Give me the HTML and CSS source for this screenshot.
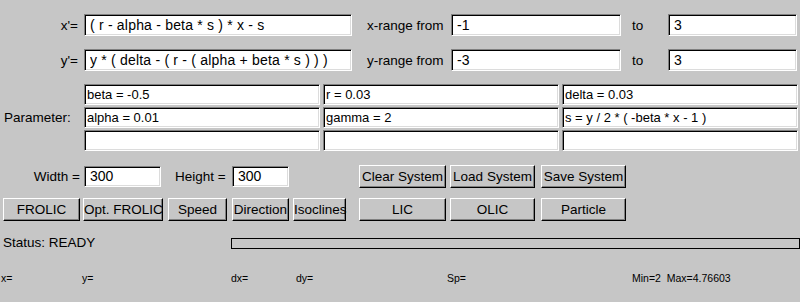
FILE: index.html
```html
<!DOCTYPE html>
<html>
<head>
<meta charset="utf-8">
<link rel="stylesheet" href="styles.css">
</head>
<body>
<div class="app">
  <div class="row eq-row">
    <label class="eq-label">x'=</label>
    <input class="field eq-field" value="( r - alpha - beta * s ) * x - s">
    <label class="range-label">x-range from</label>
    <input class="field from-field" value="-1">
    <label class="to-label">to</label>
    <input class="field to-field" value="3">
  </div>
  <div class="row eq-row second">
    <label class="eq-label">y'=</label>
    <input class="field eq-field" value="y * ( delta - ( r - ( alpha + beta * s ) ) )">
    <label class="range-label">y-range from</label>
    <input class="field from-field" value="-3">
    <label class="to-label">to</label>
    <input class="field to-field" value="3">
  </div>
  <div class="params">
    <div class="param-label">Parameter:</div>
    <div class="param-grid">
      <input class="field pfield" value="beta = -0.5">
      <input class="field pfield" value="r = 0.03">
      <input class="field pfield" value="delta = 0.03">
      <input class="field pfield" value="alpha = 0.01">
      <input class="field pfield" value="gamma = 2">
      <input class="field pfield" value="s = y / 2 * ( -beta * x - 1 )">
      <input class="field pfield" value="">
      <input class="field pfield" value="">
      <input class="field pfield" value="">
    </div>
  </div>
  <div class="row size-row">
    <label class="w-label">Width =</label>
    <input class="field w-field" value="300">
    <label class="h-label">Height =</label>
    <input class="field h-field" value="300">
    <button class="btn b-c1">Clear System</button>
    <button class="btn b-c2">Load System</button>
    <button class="btn b-c3">Save System</button>
  </div>
  <div class="row btn-row">
    <button class="btn b-frolic">FROLIC</button>
    <button class="btn b-opt">Opt. FROLIC</button>
    <button class="btn b-speed">Speed</button>
    <button class="btn b-dir">Direction</button>
    <button class="btn b-iso">Isoclines</button>
    <button class="btn b-c1">LIC</button>
    <button class="btn b-c2">OLIC</button>
    <button class="btn b-c3">Particle</button>
  </div>
  <div class="row status-row">
    <div class="status">Status: READY</div>
    <div class="progress"></div>
  </div>
  <div class="row info-row">
    <span class="info i-x">x=</span>
    <span class="info i-y">y=</span>
    <span class="info i-dx">dx=</span>
    <span class="info i-dy">dy=</span>
    <span class="info i-sp">Sp=</span>
    <span class="info i-mm">Min=2&nbsp; Max=4.76603</span>
  </div>
</div>
</body>
</html>
```
FILE: styles.css
```css
html { background: #ffffff; }
body {
  margin: 0;
  font-family: "Liberation Sans", Arial, sans-serif;
  font-size: 13.5px;
  color: #000;
}
.app {
  width: 800px;
  height: 302px;
  background: #c6c6c6;
  padding-top: 14px;
  box-sizing: border-box;
}
.row {
  display: flex;
  align-items: center;
}
.field {
  box-sizing: border-box;
  margin: 0;
  font-family: "Liberation Sans", Arial, sans-serif;
  font-size: 14px;
  color: #000;
  background: #fff;
  border: 1px solid;
  border-color: #808080 #ffffff #ffffff #808080;
  box-shadow: inset 1px 1px 0 #000, inset -1px -1px 0 #dcdcdc;
  padding: 0 0 0 5px;
  outline: none;
}
.eq-row { height: 22px; }
.eq-row.second { margin-top: 13px; }
.eq-label { width: 78px; text-align: right; margin-right: 6px; }
.eq-field { width: 268px; height: 22px; letter-spacing: 0.2px; }
.range-label { margin-left: 15px; width: 84px; }
.from-field { width: 170px; height: 22px; }
.to-label { width: 36px; padding-left: 11px; }
.to-field { width: 129px; height: 22px; }

.params {
  display: flex;
  align-items: center;
  margin-top: 13px;
}
.param-label { width: 84px; padding-left: 4px; box-sizing: border-box; }
.param-grid {
  display: grid;
  grid-template-columns: 236px 236px 236px;
  grid-auto-rows: 21px;
  column-gap: 3px;
  row-gap: 2px;
}
.pfield { height: 21px; padding-left: 2px; font-size: 13px; }

.size-row { margin-top: 14px; height: 22px; }
.w-label { width: 80px; text-align: right; margin-right: 4px; }
.w-field { width: 77px; height: 21px; }
.h-label { margin-left: 14px; width: 57px; }
.h-field { width: 57px; height: 21px; }

.btn {
  box-sizing: border-box;
  margin: 0;
  padding: 0;
  height: 23px;
  font-family: "Liberation Sans", Arial, sans-serif;
  font-size: 13.5px;
  color: #000;
  background: #c6c6c6;
  border: 1px solid;
  border-color: #ffffff #000000 #000000 #ffffff;
  box-shadow: inset -1px -1px 0 #808080;
  text-align: center;
  white-space: nowrap;
}
.size-row .b-c1 { margin-left: 70px; }
.b-c1 { width: 87px; }
.b-c2 { width: 85px; margin-left: 4px; }
.b-c3 { width: 85px; margin-left: 6px; }

.btn-row { margin-top: 11px; height: 23px; }
.b-frolic { width: 77px; margin-left: 3px; }
.b-opt { width: 80px; margin-left: 3px; }
.b-speed { width: 59px; margin-left: 5px; }
.b-dir { width: 57px; margin-left: 5px; }
.b-iso { width: 53px; margin-left: 4px; }
.btn-row .b-c1 { margin-left: 13px; }

.status-row { margin-top: 16px; height: 12px; }
.status { width: 231px; padding-left: 3px; box-sizing: border-box; line-height: 12px; }
.progress {
  width: 569px;
  height: 11px;
  box-sizing: border-box;
  border: 1px solid #000;
}

.info-row { margin-top: 23px; height: 12px; font-size: 10.5px; }
.info { display: block; }
.i-x { width: 81px; padding-left: 1px; }
.i-y { width: 149px; }
.i-dx { width: 65px; }
.i-dy { width: 151px; }
.i-sp { width: 185px; }
```
